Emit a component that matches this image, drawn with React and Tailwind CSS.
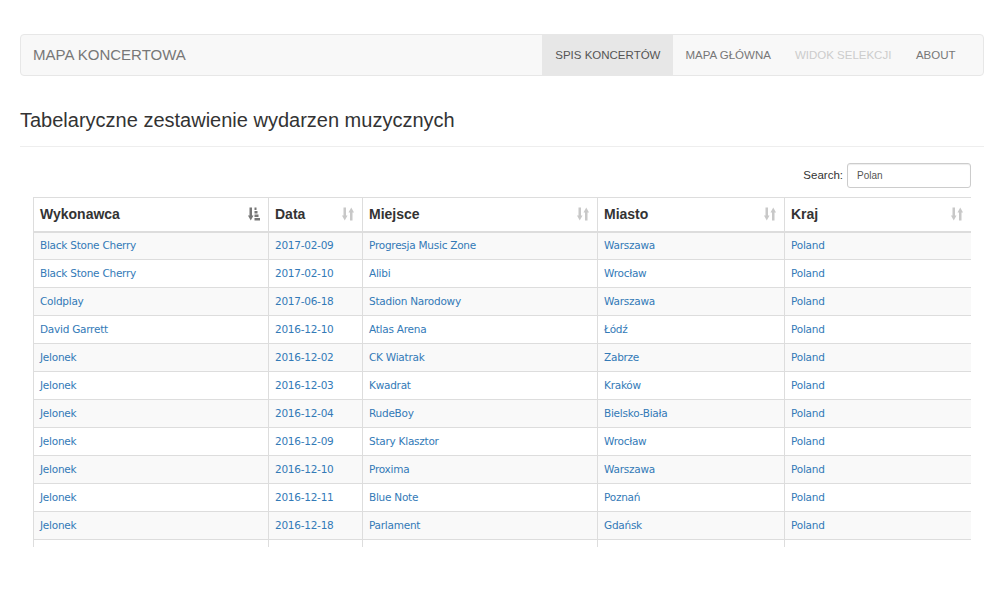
import React from "react";

const rows = [
  ["Black Stone Cherry", "2017-02-09", "Progresja Music Zone", "Warszawa", "Poland"],
  ["Black Stone Cherry", "2017-02-10", "Alibi", "Wrocław", "Poland"],
  ["Coldplay", "2017-06-18", "Stadion Narodowy", "Warszawa", "Poland"],
  ["David Garrett", "2016-12-10", "Atlas Arena", "Łódź", "Poland"],
  ["Jelonek", "2016-12-02", "CK Wiatrak", "Zabrze", "Poland"],
  ["Jelonek", "2016-12-03", "Kwadrat", "Kraków", "Poland"],
  ["Jelonek", "2016-12-04", "RudeBoy", "Bielsko-Biała", "Poland"],
  ["Jelonek", "2016-12-09", "Stary Klasztor", "Wrocław", "Poland"],
  ["Jelonek", "2016-12-10", "Proxima", "Warszawa", "Poland"],
  ["Jelonek", "2016-12-11", "Blue Note", "Poznań", "Poland"],
  ["Jelonek", "2016-12-18", "Parlament", "Gdańsk", "Poland"],
  ["", "", "", "", ""],
];

const cols = [
  { name: "Wykonawca", w: "w-[235px]", active: true },
  { name: "Data", w: "w-[94px]" },
  { name: "Miejsce", w: "w-[235px]" },
  { name: "Miasto", w: "w-[187px]" },
  { name: "Kraj", w: "w-[187px]" },
];

function SortIcon({ active }) {
  if (active) {
    return (
      <svg width="12" height="14" viewBox="0 0 12 14" className="shrink-0">
        <g fill="#777">
          <rect x="1.5" y="0.5" width="2.5" height="9.5" />
          <polygon points="0,8.5 5.5,8.5 2.75,13.5" />
          <rect x="6.5" y="0.5" width="2" height="2.5" />
          <rect x="6.5" y="4" width="3" height="2.5" />
          <rect x="6.5" y="7.5" width="4" height="2.5" />
          <rect x="6.5" y="11" width="5.5" height="2.5" />
        </g>
      </svg>
    );
  }
  return (
    <svg width="12" height="14" viewBox="0 0 12 14" className="shrink-0">
      <g fill="#c8c8c8">
        <rect x="1.5" y="0.5" width="2.5" height="9.5" />
        <polygon points="0,8.5 5.5,8.5 2.75,13.5" />
        <rect x="8" y="4" width="2.5" height="9.5" />
        <polygon points="6.5,5.5 12,5.5 9.25,0.5" />
      </g>
    </svg>
  );
}

export default function App() {
  return (
    <div className="w-[1000px] h-[600px] bg-white pl-5 pr-4 pt-[34px]" style={{ fontFamily: "'Liberation Sans', Arial, sans-serif" }}>
      <nav className="h-[42px] border border-[#e7e7e7] bg-[#f8f8f8] rounded-[4px] flex items-stretch justify-between">
        <div className="flex items-center pl-[12px] pt-[1px] text-[15px] text-[#777]">MAPA KONCERTOWA</div>
        <ul className="flex items-stretch text-[11.5px] mr-[15px]">
          <li className="flex items-center pt-[1px] px-[13px] bg-[#e7e7e7] text-[#555]">SPIS KONCERTÓW</li>
          <li className="flex items-center pt-[1px] px-[12px] text-[#777]">MAPA GŁÓWNA</li>
          <li className="flex items-center pt-[1px] px-[12px] text-[#ccc]">WIDOK SELEKCJI</li>
          <li className="flex items-center pt-[1px] px-[12.5px] text-[#777]">ABOUT</li>
        </ul>
      </nav>

      <h3 className="mt-[33px] text-[20px] leading-[22px] text-[#333] pb-[15px] border-b border-[#eee]">
        Tabelaryczne zestawienie wydarzen muzycznych
      </h3>

      <div className="px-[13px]">
        <div className="flex justify-end items-center mt-[16px] h-[25px] text-[11.5px] text-[#333]">
          <span className="mr-[4px]">Search:</span>
          <div className="w-[124px] h-[25px] border border-[#ccc] rounded-[3px] flex items-center pl-[9px] text-[10px] text-[#555] shadow-[inset_0_1px_1px_rgba(0,0,0,0.075)]">
            Polan
          </div>
        </div>

        <div className="mt-[9px] h-[350px] overflow-hidden">
          <table className="w-[938px] border-collapse table-fixed">
            <thead>
              <tr>
                {cols.map((c) => (
                  <th
                    key={c.name}
                    className={`${c.w} h-[34px] border border-[#ddd] border-b-2 text-left pl-[6px] pr-[8px] text-[14px] font-bold text-[#333]`}
                  >
                    <div className="flex items-center justify-between">
                      <span>{c.name}</span>
                      <SortIcon active={c.active} />
                    </div>
                  </th>
                ))}
              </tr>
            </thead>
            <tbody>
              {rows.map((r, i) => (
                <tr key={i} className={i % 2 === 0 ? "bg-[#f9f9f9]" : "bg-white"}>
                  {r.map((v, j) => (
                    <td
                      key={j}
                      className="h-[28px] border border-[#ddd] px-[6px] text-[10.5px] tracking-[-0.25px] text-[#337ab7] whitespace-nowrap"
                      style={{ fontFamily: "'DejaVu Sans', Verdana, sans-serif" }}
                    >
                      {v}
                    </td>
                  ))}
                </tr>
              ))}
            </tbody>
          </table>
        </div>
      </div>
    </div>
  );
}
